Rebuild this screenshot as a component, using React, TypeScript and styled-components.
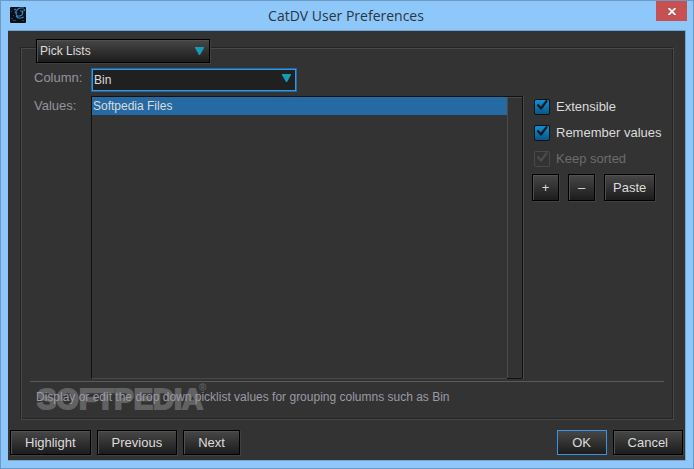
import React, { useState } from "react";
import styled, { createGlobalStyle, css } from "styled-components";

const GlobalStyle = createGlobalStyle`
  * { box-sizing: border-box; }
  body {
    margin: 0;
    background: #8ec8fa;
    font: 13px/16px "Liberation Sans", Arial, sans-serif;
    color: #dcdcdc;
  }
  button, select, input { font: inherit; color: inherit; margin: 0; }
`;

const Window = styled.div`
  min-height: 100vh;
  display: flex;
  flex-direction: column;
  padding: 0 7px 7px;
  border: 1px solid #6c9ac4;
  background: #8ec8fa;
`;

const TitleBar = styled.header`
  display: grid;
  grid-template-columns: 28px 1fr 31px;
  height: 29px;
  flex: none;
  margin-right: -1px;
`;

const AppIcon = styled.svg`
  margin: 6px 0 0 2px;
`;

const Title = styled.h1`
  margin: 0;
  text-align: center;
  font: 14px/29px "Open Sans", "Segoe UI", sans-serif;
  color: #2c3440;
`;

const CloseButton = styled.button`
  height: 20px;
  padding: 0;
  border: 0;
  display: flex;
  align-items: center;
  justify-content: center;
  background: #c75050;
`;

const Content = styled.main`
  flex: 1;
  display: flex;
  flex-direction: column;
  border: 1px solid #74a5d0;
  border-width: 1px 1px 1px 0;
  padding: 16px 2px 5px 2px;
  background: #333333;
`;

const Panel = styled.section`
  flex: 1;
  display: flex;
  flex-direction: column;
  margin: 0 9px 0 10px;
  border: 1px solid #242424;
  border-right-color: #484848;
  border-bottom-color: #484848;
  box-shadow: inset 1px 1px #484848, inset -1px -1px #242424;
`;

const raised = css`
  border: 1px solid #000;
  background: linear-gradient(#474747, #1c1c1c);
  box-shadow: 1px 1px #404040, inset 1px 1px #505050;
`;

const SelectWrap = styled.div<{ $width: number }>`
  display: grid;
  align-items: center;
  width: ${(p) => p.$width}px;
  > * { grid-area: 1 / 1; }
`;

const Select = styled.select<{ $focused?: boolean }>`
  appearance: none;
  width: 100%;
  height: 24px;
  border-radius: 0;
  outline: none;
  font-size: 12px;
  ${(p) =>
    p.$focused
      ? css`
          padding: 0 2px;
          border: 1px solid #2368a3;
          box-shadow: inset 0 0 0 1px #3796e2;
          background: #202020;
        `
      : css`
          padding: 0 3px;
          ${raised}
        `}
`;

const Arrow = styled.svg<{ $raised?: boolean }>`
  justify-self: end;
  margin: 0 6px ${(p) => (p.$raised ? 4 : 0)}px 0;
  pointer-events: none;
`;

const SectionPicker = styled.div`
  margin: -9px 0 0 15px;
`;

const Form = styled.div`
  flex: 1;
  display: grid;
  grid-template-columns: 57px 1fr 132px;
  grid-template-rows: 24px 1fr;
  row-gap: 4px;
  padding: 5px 9px 0 13px;
`;

const Label = styled.label`
  padding-top: 2px;
  color: #94949e;
`;

const ColumnField = styled.div`
  grid-column: 2 / 4;
`;

const ListFrame = styled.div`
  display: grid;
  grid-template-columns: 1fr 15px;
  margin-right: 9px;
  border: 1px solid #111;
  border-bottom-color: #484848;
  box-shadow: 1px 0 #484848;
`;

const List = styled.ul`
  margin: 0;
  padding: 0;
  list-style: none;
`;

const Item = styled.li`
  padding: 1px;
  font-size: 12px;
  background: #256aa3;
`;

const ScrollTrack = styled.div`
  border: 1px solid #4a4a4a;
  border-width: 1px 0 0 1px;
  box-shadow: 0 1px #111;
`;

const Side = styled.div`
  display: flex;
  flex-direction: column;
  gap: 10px;
  padding-top: 3px;
`;

const CheckRow = styled.label<{ $disabled?: boolean }>`
  display: flex;
  align-items: center;
  gap: 6px;
  margin-left: 2px;
  height: 16px;
  white-space: nowrap;
  color: ${(p) => (p.$disabled ? "#6c6c6c" : "#dcdcdc")};
`;

const CheckFace = styled.span`
  display: grid;
  width: 16px;
  height: 16px;
  > * { grid-area: 1 / 1; }
`;

const CheckInput = styled.input`
  appearance: none;
  width: 16px;
  height: 16px;
  border: 1px solid #08131c;
  border-radius: 2px;
  background: #2c2c2c;
  &:checked { background: linear-gradient(#1090d4, #0c5584); }
  &:disabled { border-color: #494949; background: #333; }
`;

const Tick = styled.svg`
  pointer-events: none;
`;

const Button = styled.button<{ $default?: boolean; $square?: boolean }>`
  height: ${(p) => (p.$square ? 27 : 25)}px;
  padding: 0 ${(p) => (p.$square ? 8 : 14)}px;
  min-width: ${(p) => (p.$square ? 27 : 50)}px;
  white-space: nowrap;
  ${raised}
  ${(p) => p.$default && css`
    border-color: #3796e2;
    box-shadow: none;
  `}
`;

const ListActions = styled.div`
  display: flex;
  gap: 9px;
  margin-top: -3px;
`;

const Help = styled.footer`
  position: relative;
  height: 38px;
  margin: 2px 9px 0;
  border-top: 1px solid #5a5a5a;
  padding: 7px 6px;
  font-size: 12px;
  color: #9a9aa6;
`;

const Watermark = styled.div`
  position: absolute;
  left: 7px;
  top: 1px;
  display: flex;
  font: bold 29px/32px "Liberation Sans", Arial, sans-serif;
  color: #626262;
  -webkit-text-stroke: 2px #626262;
`;

const Registered = styled.span`
  margin-left: -4px;
  font-size: 10px;
  line-height: 10px;
  -webkit-text-stroke: 0;
`;

const HelpText = styled.p`
  position: relative;
  margin: 0;
`;

const ButtonBar = styled.div`
  display: flex;
  gap: 6px;
  margin-top: 10px;
`;

const Spacer = styled.div`
  flex: 1;
`;

const DownArrow = ({ raised: up }: { raised?: boolean }) => (
  <Arrow $raised={up} width="9" height="8" viewBox="0 0 9 8" aria-hidden="true">
    <path d="M0 0h9v1L5 8H4L0 1z" fill="#159cb4" />
  </Arrow>
);

type CheckProps = { label: string; initial: boolean; disabled?: boolean };

const Check = ({ label, initial, disabled }: CheckProps) => {
  const [on, setOn] = useState(initial);
  return (
    <CheckRow $disabled={disabled}>
      <CheckFace>
        <CheckInput type="checkbox" checked={on} disabled={disabled} onChange={() => setOn(!on)} />
        {on && (
          <Tick width="16" height="16" viewBox="0 0 16 16" aria-hidden="true">
            <path d="M3.5 5.5L7 9.5L13 1.5" fill="none" stroke={disabled ? "#4c4c4c" : "#101820"} strokeWidth="2.2" />
          </Tick>
        )}
      </CheckFace>
      {label}
    </CheckRow>
  );
};

export default function App() {
  return (
    <>
      <GlobalStyle />
      <Window>
        <TitleBar>
          <AppIcon width="16" height="16" viewBox="0 0 16 16" aria-hidden="true">
            <rect width="16" height="16" rx="1" fill="#0b0e13" />
            <path d="M4 3L6 2M5 6L6 4L8 2L10 1H14M14 2L15 4M13 5L12 8L10 9L7 9L6 7L7 5M10 4L13 4L12 6M6 9L8 11L11 11L14 10" fill="none" stroke="#3489c9" strokeWidth="1.1" />
            <path d="M1 11h2v1H1zM3 13h3v1H3zM1 4h1v1H1zM3 8h1v1H3zM12 13h2v1h-2z" fill="#244b6c" />
          </AppIcon>
          <Title>CatDV User Preferences</Title>
          <CloseButton aria-label="Close">
            <svg width="8" height="7" viewBox="0 0 8 7" aria-hidden="true">
              <path d="M0.5 0L7.5 7M7.5 0L0.5 7" stroke="#fff" strokeWidth="1.8" />
            </svg>
          </CloseButton>
        </TitleBar>
        <Content>
          <Panel>
            <SectionPicker>
              <SelectWrap $width={174}>
                <Select aria-label="Section">
                  <option>Pick Lists</option>
                </Select>
                <DownArrow />
              </SelectWrap>
            </SectionPicker>
            <Form>
              <Label htmlFor="column">Column:</Label>
              <ColumnField>
                <SelectWrap $width={206}>
                  <Select id="column" $focused>
                    <option>Bin</option>
                  </Select>
                  <DownArrow raised />
                </SelectWrap>
              </ColumnField>
              <Label as="span" id="values">Values:</Label>
              <ListFrame>
                <List role="listbox" aria-labelledby="values">
                  <Item role="option" aria-selected="true">Softpedia Files</Item>
                </List>
                <ScrollTrack />
              </ListFrame>
              <Side>
                <Check label="Extensible" initial />
                <Check label="Remember values" initial />
                <Check label="Keep sorted" initial disabled />
                <ListActions>
                  <Button $square>+</Button>
                  <Button $square>–</Button>
                  <Button $square>Paste</Button>
                </ListActions>
              </Side>
            </Form>
            <Help>
              <Watermark>
                SOFTPEDIA<Registered>®</Registered>
              </Watermark>
              <HelpText>Display or edit the drop down picklist values for grouping columns such as Bin</HelpText>
            </Help>
          </Panel>
          <ButtonBar>
            <Button>Highlight</Button>
            <Button>Previous</Button>
            <Button>Next</Button>
            <Spacer />
            <Button $default>OK</Button>
            <Button>Cancel</Button>
          </ButtonBar>
        </Content>
      </Window>
    </>
  );
}
